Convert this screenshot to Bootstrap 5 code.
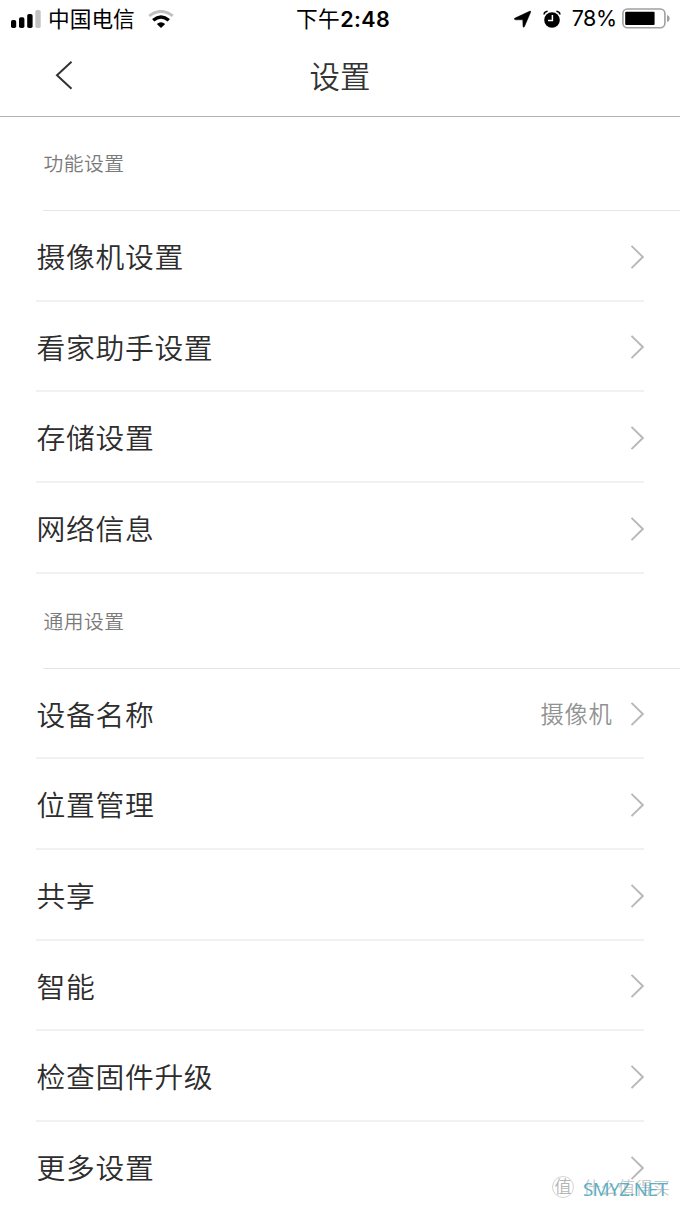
<!DOCTYPE html>
<html lang="zh-CN">
<head>
<meta charset="utf-8">
<meta name="viewport" content="width=device-width, initial-scale=1">
<title>设置</title>
<link href="https://cdn.jsdelivr.net/npm/bootstrap@5.3.0/dist/css/bootstrap.min.css" rel="stylesheet">
<style>
body{font-family:"Noto Sans CJK SC DemiLight","Noto Sans CJK SC",sans-serif;font-weight:300;background:#fff;color:#333;height:1209px;overflow:hidden}
.screen{width:680px;height:1209px;overflow:hidden}
.status{height:38px;color:#000;font-family:"Noto Sans CJK SC",sans-serif;font-weight:400;font-size:21.7px;line-height:36px;padding-left:10px;padding-right:10px}
.carrier{margin-left:7px;height:38px}
.latin{font-family:Inter,"Noto Sans CJK SC",sans-serif}
.clock{left:296px;top:0;letter-spacing:.4px}
.clock .latin{font-weight:600;font-size:21.5px}
.pct{font-size:21.5px;letter-spacing:-.5px;margin-left:11px;height:38px}
.titlebar{height:79px;border-bottom:1px solid #b2b2b2}
.titlebar h1{font-size:30.4px;font-weight:300;letter-spacing:.2px;line-height:75px}
.back{left:55px;top:22px}
.section-label{height:94px;margin-left:43px;padding-left:.5px;border-bottom:1px solid #e5e5e5;font-size:19.8px;letter-spacing:.5px;color:#7a7a7a;line-height:92px}
.second{height:95px;line-height:93px}
.setting{height:90.67px;margin:0 36px;padding-top:.4px;border-bottom:2px solid #f1f1f1;font-size:28.8px;letter-spacing:.65px;color:#2d2d2d}
.setting>span:first-child{padding-left:.6px}
.setting>svg{margin-top:2.4px}
.setting .value{font-size:23.3px;letter-spacing:.7px;color:#929292;margin-right:17.5px;padding-top:1.6px}
.watermark{left:552px;top:1174px;height:28px;width:128px}
.seal{left:0;top:2px;width:22px;height:22px;border:1px solid #d5d5d5;border-radius:50%;font-size:17px;line-height:18px;color:#b5b5b5}
.ghost{left:31px;top:0;font-size:17.4px;line-height:26px;color:#c8c8c8;white-space:nowrap}
.site{left:31px;top:2px;font:18.8px/26px "Open Sans","Noto Sans",sans-serif;color:#5aafc4;letter-spacing:-.5px}
</style>
</head>
<body>
<main class="screen position-relative">
  <div class="status d-flex align-items-center position-relative">
    <svg width="31" height="18" viewBox="0 0 31 18"><g><rect x="1" y="10" width="5.2" height="8" rx="1.8"/><rect x="9" y="7.2" width="5.4" height="10.8" rx="1.8"/><rect x="17.2" y="4" width="5.4" height="14" rx="1.8"/><rect x="25.3" y="0" width="5.4" height="18" rx="1.8" fill="#c2c2c2"/></g></svg>
    <span class="carrier">中国电信</span>
    <svg style="margin-left:13px" width="26" height="19" viewBox="0 0 26 19" fill="none"><path d="M1.2 5.9Q13-3.1 24.8 5.9" stroke="#c0c0c0" stroke-width="3"/><path d="M5.2 10.3Q13 3.8 20.8 10.3" stroke="#000" stroke-width="3.4"/><path d="M8.8 14Q13 10.3 17.2 14L13 18.1Z" fill="#000"/></svg>
    <div class="clock position-absolute">下午<span class="latin">2:48</span></div>
    <div class="ms-auto d-flex align-items-center">
      <svg width="17" height="18" viewBox="0 0 17 18"><path d="M15.5 1.3Q17.2.6 16.6 2.3L10.5 16.4Q9.4 18.2 9 16.3L8.8 9.8H1.6Q-.8 9.2 1 8.1Z" stroke="#000" stroke-width=".5"/></svg>
      <svg style="margin-left:12px" width="18" height="19" viewBox="0 0 18 19"><circle cx="9" cy="10" r="7.8"/><path d="M1 4.5Q1.3 1.5 4.6 1.2M17 4.5Q16.7 1.5 13.4 1.2" fill="none" stroke="#000" stroke-width="1.5"/><path d="M9.4 5V10.6H5" fill="none" stroke="#fff" stroke-width="1.5"/></svg>
      <span class="latin pct">78%</span>
      <svg style="margin-left:5.5px" width="48" height="22" viewBox="0 0 48 22"><rect x=".9" y="1" width="42" height="18.8" rx="4.5" fill="none" stroke="#a0a0a0" stroke-width="1.6"/><rect x="3.2" y="3.8" width="29.4" height="13.3" rx="1"/><path d="M45 6.9Q47.7 7.6 47.7 10.4T45 13.9Z" fill="#a0a0a0"/></svg>
    </div>
  </div>
  <header class="titlebar position-relative text-center">
    <svg class="back position-absolute" width="18" height="30" viewBox="0 0 18 30" fill="none" stroke="#333" stroke-width="2"><path d="M16.5 1.8L2 15.3L16.5 28.8"/></svg>
    <h1 class="m-0">设置</h1>
  </header>

  <div class="section-label">功能设置</div>
  <div>
    <div class="setting d-flex align-items-center"><span>摄像机设置</span><svg class="ms-auto" width="14" height="26"><use href="#chev"/></svg></div>
    <div class="setting d-flex align-items-center"><span>看家助手设置</span><svg class="ms-auto" width="14" height="26"><use href="#chev"/></svg></div>
    <div class="setting d-flex align-items-center"><span>存储设置</span><svg class="ms-auto" width="14" height="26"><use href="#chev"/></svg></div>
    <div class="setting d-flex align-items-center"><span>网络信息</span><svg class="ms-auto" width="14" height="26"><use href="#chev"/></svg></div>
  </div>
  <div class="section-label second">通用设置</div>
  <div>
    <div class="setting d-flex align-items-center"><span>设备名称</span><span class="value ms-auto">摄像机</span><svg width="14" height="26"><use href="#chev"/></svg></div>
    <div class="setting d-flex align-items-center"><span>位置管理</span><svg class="ms-auto" width="14" height="26"><use href="#chev"/></svg></div>
    <div class="setting d-flex align-items-center"><span>共享</span><svg class="ms-auto" width="14" height="26"><use href="#chev"/></svg></div>
    <div class="setting d-flex align-items-center"><span>智能</span><svg class="ms-auto" width="14" height="26"><use href="#chev"/></svg></div>
    <div class="setting d-flex align-items-center"><span>检查固件升级</span><svg class="ms-auto" width="14" height="26"><use href="#chev"/></svg></div>
    <div class="setting d-flex align-items-center"><span>更多设置</span><svg class="ms-auto" width="14" height="26"><use href="#chev"/></svg></div>
  </div>

  <div class="watermark position-absolute">
    <span class="seal position-absolute text-center">值</span>
    <span class="ghost position-absolute">什么值得买</span>
    <span class="site position-absolute">SMYZ.NET</span>
  </div>
</main>
<svg class="position-absolute" width="0" height="0"><defs><path id="chev" d="M1.5 1.8L12.8 13L1.5 24.2" fill="none" stroke="#b8b8b8" stroke-width="1.9"/></defs></svg>
<script src="https://cdn.jsdelivr.net/npm/bootstrap@5.3.0/dist/js/bootstrap.bundle.min.js"></script>
</body>
</html>
